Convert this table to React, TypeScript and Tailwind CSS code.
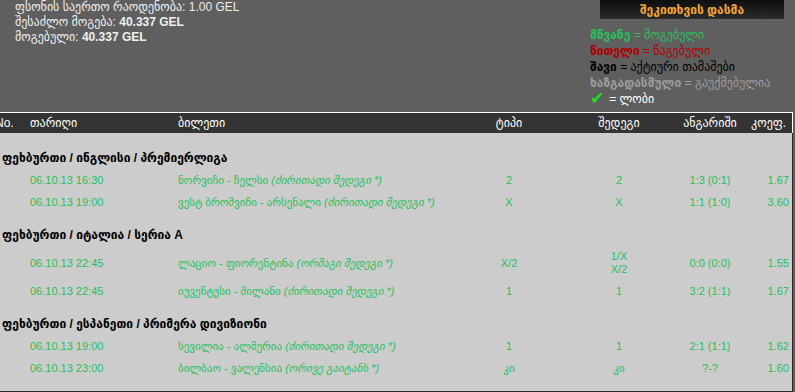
import React from 'react'

type Row = {
  date: string
  match: string
  market: string
  type: string
  result: string[]
  score: string
  coef: string
}

type Group = { title: string; rows: Row[] }

const groups: Group[] = [
  {
    title: 'ფეხბურთი / ინგლისი / პრემიერლიგა',
    rows: [
      { date: '06.10.13 16:30', match: 'ნორვიჩი - ჩელსი', market: '(ძირითადი შედეგი *)', type: '2', result: ['2'], score: '1:3 (0:1)', coef: '1.67' },
      { date: '06.10.13 19:00', match: 'ვესტ ბრომვიჩი - არსენალი', market: '(ძირითადი შედეგი *)', type: 'X', result: ['X'], score: '1:1 (1:0)', coef: '3.60' },
    ],
  },
  {
    title: 'ფეხბურთი / იტალია / სერია A',
    rows: [
      { date: '06.10.13 22:45', match: 'ლაციო - ფიორენტინა', market: '(ორმაგი შედეგი *)', type: 'X/2', result: ['1/X', 'X/2'], score: '0:0 (0:0)', coef: '1.55' },
      { date: '06.10.13 22:45', match: 'იუვენტუსი - მილანი', market: '(ძირითადი შედეგი *)', type: '1', result: ['1'], score: '3:2 (1:1)', coef: '1.67' },
    ],
  },
  {
    title: 'ფეხბურთი / ესპანეთი / პრიმერა დივიზიონი',
    rows: [
      { date: '06.10.13 19:00', match: 'სევილია - ალმერია', market: '(ძირითადი შედეგი *)', type: '1', result: ['1'], score: '2:1 (1:1)', coef: '1.62' },
      { date: '06.10.13 23:00', match: 'ბილბაო - ვალენსია', market: '(ორივე გაიტანს *)', type: 'კი', result: ['კი'], score: '?-?', coef: '1.60' },
    ],
  },
]

const font = { fontFamily: '"Liberation Sans", "DejaVu Sans", sans-serif' }

function Summary() {
  return (
    <div className="pl-[15px] text-[12px] leading-[15px] text-[#f0f0f0]">
      <div>ფსონის საერთო რაოდენობა: 1.00 GEL</div>
      <div>
        შესაძლო მოგება: <b className="font-bold">40.337 GEL</b>
      </div>
      <div>
        მოგებული: <b className="font-bold">40.337 GEL</b>
      </div>
    </div>
  )
}

function Legend() {
  return (
    <div className="w-[205px] shrink-0">
      <button className="ml-[10px] flex h-[19px] w-[184px] items-center justify-center bg-gradient-to-b from-[#0e0e0e] to-[#2c2c2c] text-[12px] font-bold text-[#f5a437]">
        შეკითხვის დასმა
      </button>
      <div className="mt-[8px] text-[12px] leading-[16px]">
        <div className="text-[#27c05a]">
          <b>მწვანე</b> = მოგებული
        </div>
        <div className="text-[#b00000]">
          <b>წითელი</b> = წაგებული
        </div>
        <div className="text-black">
          <b>შავი</b> = აქტიური თამაშები
        </div>
        <div className="text-[#9c9c9c]">
          <b>ხაზგადასმული</b> = გაუქმებულია
        </div>
        <div className="flex items-center gap-[5px] text-white">
          <span className="text-[17px] font-bold leading-[16px] text-[#22dd22]">✔</span>
          <span>= ლობი</span>
        </div>
      </div>
    </div>
  )
}

function BetRow({ row }: { row: Row }) {
  const tall = row.result.length > 1
  return (
    <div className={`flex items-center text-[11px] text-[#27c05a] ${tall ? 'h-[34px]' : 'h-[22px]'}`}>
      <div className="w-[30px]" />
      <div className="w-[148px]">{row.date}</div>
      <div className="w-[282px]">
        {row.match} <i className="italic">{row.market}</i>
      </div>
      <div className="w-[98px] text-center">{row.type}</div>
      <div className="w-[122px] text-center leading-[13px]">
        {row.result.map((r) => (
          <div key={r}>{r}</div>
        ))}
      </div>
      <div className="w-[60px] text-center">{row.score}</div>
      <div className="flex-1 pr-[3px] text-right">{row.coef}</div>
    </div>
  )
}

export default function App() {
  return (
    <div className="h-[392px] w-[795px] overflow-hidden bg-[#5f5f5f]" style={font}>
      <div className="flex h-[112px] justify-between">
        <Summary />
        <Legend />
      </div>

      <div className="w-[793px]">
        {/* header */}
        <div className="flex h-[21px] items-center border-t border-r border-white bg-[#333333] text-[12px] text-white">
          <div className="ml-[-5px] w-[35px]">No.</div>
          <div className="w-[148px]">თარიღი</div>
          <div className="w-[282px]">ბილეთი</div>
          <div className="w-[98px] text-center">ტიპი</div>
          <div className="w-[122px] text-center">შედეგი</div>
          <div className="w-[60px] text-center">ანგარიში</div>
          <div className="flex-1 pr-[6px] text-right">კოეფ.</div>
        </div>

        {/* body */}
        <div className="border-r border-b border-[#2a2a2a] bg-[#cccccc] pt-[3px] pb-[12px]">
          {groups.map((g) => (
            <div key={g.title} className="mt-[11px]">
              <div className="flex h-[22px] items-center pl-[2px] text-[12px] font-bold text-black">{g.title}</div>
              {g.rows.map((r) => (
                <BetRow key={r.date + r.match} row={r} />
              ))}
            </div>
          ))}
        </div>
      </div>
    </div>
  )
}
